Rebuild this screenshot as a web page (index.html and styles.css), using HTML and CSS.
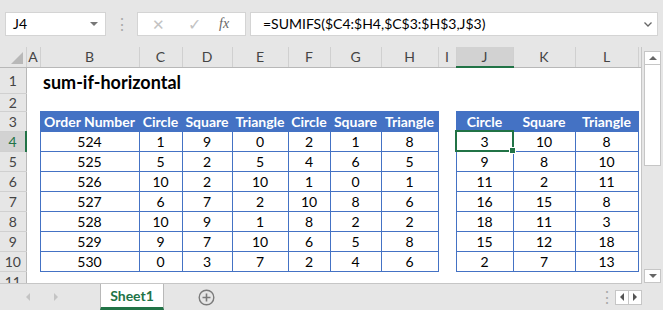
FILE: index.html
```html
<!DOCTYPE html>
<html lang="en">
<head>
    <meta charset="UTF-8">
    <title>sum-if-horizontal</title>
    <link rel="stylesheet" href="styles.css">
</head>
<body>
    <div class="app">
        <!-- formula bar -->
        <div class="formula-bar">
            <div class="name-box">J4<span class="drop"></span></div>
            <div class="grip">&#8942;</div>
            <div class="fx-box">
                <span class="fx-cancel">&#x2715;</span>
                <span class="fx-enter">&#x2713;</span>
                <span class="fx-label">fx</span>
            </div>
            <div class="formula-input">=SUMIFS($C4:$H4,$C$3:$H$3,J$3)
                <svg class="chevron" width="8" height="5" viewBox="0 0 8 5"><path d="M0.5 0.5 L4 4 L7.5 0.5" fill="none" stroke="#666" stroke-width="1.3"/></svg>
            </div>
        </div>

        <div class="main">
            <div class="sheet">
                <table class="grid">
                    <colgroup>
                        <col style="width:26px"><col style="width:14px"><col style="width:99px">
                        <col style="width:43px"><col style="width:50px"><col style="width:56px">
                        <col style="width:42px"><col style="width:51px"><col style="width:57px">
                        <col style="width:18px"><col style="width:57px"><col style="width:62px">
                        <col style="width:63px"><col style="width:4px">
                    </colgroup>
                    <thead>
                        <tr class="col-heads">
                            <th class="corner"><span class="select-all"></span></th>
                            <th>A</th><th>B</th><th>C</th><th>D</th><th>E</th><th>F</th><th>G</th><th>H</th>
                            <th>I</th><th class="active">J</th><th>K</th><th>L</th><th></th>
                        </tr>
                    </thead>
                    <tbody>
                        <tr class="row-1">
                            <th class="rh">1</th><td></td><td class="title">sum-if-horizontal</td>
                            <td></td><td></td><td></td><td></td><td></td><td></td><td></td><td></td><td></td><td></td><td></td>
                        </tr>
                        <tr class="row-2">
                            <th class="rh">2</th><td></td><td></td><td></td><td></td><td></td><td></td><td></td><td></td><td></td><td></td><td></td><td></td><td></td>
                        </tr>
                        <tr>
                            <th class="rh">3</th><td></td>
                            <td class="hd">Order Number</td><td class="hd">Circle</td><td class="hd">Square</td><td class="hd">Triangle</td>
                            <td class="hd">Circle</td><td class="hd">Square</td><td class="hd">Triangle</td>
                            <td></td>
                            <td class="hd">Circle</td><td class="hd">Square</td><td class="hd">Triangle</td><td></td>
                        </tr>
                        <tr>
                            <th class="rh active">4</th><td></td>
                            <td class="c">524</td><td class="c">1</td><td class="c">9</td><td class="c">0</td><td class="c">2</td><td class="c">1</td><td class="c">8</td>
                            <td></td>
                            <td class="c sel">3<span class="sel-box"></span></td><td class="c">10</td><td class="c">8</td><td></td>
                        </tr>
                        <tr>
                            <th class="rh">5</th><td></td>
                            <td class="c">525</td><td class="c">5</td><td class="c">2</td><td class="c">5</td><td class="c">4</td><td class="c">6</td><td class="c">5</td>
                            <td></td>
                            <td class="c">9</td><td class="c">8</td><td class="c">10</td><td></td>
                        </tr>
                        <tr>
                            <th class="rh">6</th><td></td>
                            <td class="c">526</td><td class="c">10</td><td class="c">2</td><td class="c">10</td><td class="c">1</td><td class="c">0</td><td class="c">1</td>
                            <td></td>
                            <td class="c">11</td><td class="c">2</td><td class="c">11</td><td></td>
                        </tr>
                        <tr>
                            <th class="rh">7</th><td></td>
                            <td class="c">527</td><td class="c">6</td><td class="c">7</td><td class="c">2</td><td class="c">10</td><td class="c">8</td><td class="c">6</td>
                            <td></td>
                            <td class="c">16</td><td class="c">15</td><td class="c">8</td><td></td>
                        </tr>
                        <tr>
                            <th class="rh">8</th><td></td>
                            <td class="c">528</td><td class="c">10</td><td class="c">9</td><td class="c">1</td><td class="c">8</td><td class="c">2</td><td class="c">2</td>
                            <td></td>
                            <td class="c">18</td><td class="c">11</td><td class="c">3</td><td></td>
                        </tr>
                        <tr>
                            <th class="rh">9</th><td></td>
                            <td class="c">529</td><td class="c">9</td><td class="c">7</td><td class="c">10</td><td class="c">6</td><td class="c">5</td><td class="c">8</td>
                            <td></td>
                            <td class="c">15</td><td class="c">12</td><td class="c">18</td><td></td>
                        </tr>
                        <tr>
                            <th class="rh">10</th><td></td>
                            <td class="c">530</td><td class="c">0</td><td class="c">3</td><td class="c">7</td><td class="c">2</td><td class="c">4</td><td class="c">6</td>
                            <td></td>
                            <td class="c">2</td><td class="c">7</td><td class="c">13</td><td></td>
                        </tr>
                        <tr>
                            <th class="rh">11</th><td></td><td></td><td></td><td></td><td></td><td></td><td></td><td></td><td></td><td></td><td></td><td></td><td></td>
                        </tr>
                    </tbody>
                </table>
            </div>
            <div class="vscroll">
                <div class="sb-btn"><span class="tri-up"></span></div>
                <div class="sb-thumb"></div>
                <div class="sb-track"></div>
                <div class="sb-btn"><span class="tri-down"></span></div>
            </div>
        </div>

        <!-- sheet tabs -->
        <div class="tab-bar">
            <div class="tab-nav">
                <span class="tri-left light"></span>
                <span class="tri-right light"></span>
            </div>
            <div class="tab active-tab">Sheet1</div>
            <div class="add-sheet">
                <svg width="17" height="17" viewBox="0 0 17 17">
                    <circle cx="8.5" cy="8.5" r="7.3" fill="none" stroke="#7a7a7a" stroke-width="1.4"/>
                    <path d="M8.5 4.5 V12.5 M4.5 8.5 H12.5" stroke="#7a7a7a" stroke-width="1.6"/>
                </svg>
            </div>
            <div class="spacer"></div>
            <div class="grip small">&#8942;</div>
            <div class="h-scroll">
                <div class="hs-btn"><span class="tri-left"></span></div>
                <div class="hs-btn"><span class="tri-right"></span></div>
            </div>
        </div>
    </div>
</body>
</html>
```

FILE: styles.css
```css
/* page */
body {
    margin: 0;
    font-family: 'Lato', 'Liberation Sans', sans-serif;
    color: #000;
    background-color: #e6e6e6;
    overflow: hidden;
}

.app {
    width: 663px;
    height: 310px;
    display: flex;
    flex-direction: column;
    background-color: #e6e6e6;
}

/* formula bar */
.formula-bar {
    height: 47px;
    box-sizing: border-box;
    padding: 12px 5px 0 5px;
    display: flex;
    align-items: flex-start;
}

.name-box {
    width: 101px;
    height: 24px;
    box-sizing: border-box;
    background-color: #fff;
    border: 1px solid #d4d4d4;
    padding-left: 7px;
    font-size: 14px;
    line-height: 22px;
    position: relative;
}

.drop {
    position: absolute;
    right: 7px;
    top: 9px;
    border-left: 4px solid transparent;
    border-right: 4px solid transparent;
    border-top: 4px solid #777;
}

.grip {
    width: 31px;
    text-align: center;
    color: #aaa;
    font-size: 16px;
    line-height: 24px;
}

.fx-box {
    width: 109px;
    height: 24px;
    box-sizing: border-box;
    background-color: #fff;
    border: 1px solid #d4d4d4;
    display: flex;
    align-items: center;
}

.fx-cancel {
    width: 18px;
    margin-left: 11px;
    color: #c3c3c3;
    font-size: 15px;
    text-align: center;
}

.fx-enter {
    width: 18px;
    margin-left: 18px;
    color: #c3c3c3;
    font-size: 16px;
    text-align: center;
}

.fx-label {
    margin-left: 16px;
    font-family: 'Liberation Serif', serif;
    font-style: italic;
    font-size: 14px;
    color: #666;
}

.formula-input {
    margin-left: 4px;
    flex: 1;
    height: 24px;
    box-sizing: border-box;
    background-color: #fff;
    border: 1px solid #d4d4d4;
    padding-left: 12px;
    font-size: 14px;
    line-height: 22px;
    position: relative;
}

.chevron {
    position: absolute;
    right: 5px;
    top: 9px;
}

/* sheet */
.main {
    height: 237px;
    display: flex;
}

.sheet {
    width: 642px;
    height: 237px;
    box-sizing: border-box;
    border-right: 1px solid #c6c6c6;
    border-bottom: 1px solid #c6c6c6;
    overflow: hidden;
    background-color: #fff;
}

.grid {
    table-layout: fixed;
    border-collapse: collapse;
    width: 641px;
    font-size: 14px;
}

.grid td,
.grid th {
    padding: 0;
    white-space: nowrap;
    text-align: center;
    height: 20px;
    box-sizing: border-box;
}

.col-heads th {
    background-color: #e6e6e6;
    font-weight: normal;
    color: #444;
    border-right: 1px solid #d0d0d0;
    border-bottom: 1px solid #b8b8b8;
    height: 20px;
}

.col-heads th.active {
    background-color: #d2d2d2;
    border-bottom: 2px solid #217346;
}

.corner {
    position: relative;
}

.select-all {
    position: absolute;
    right: 3px;
    bottom: 3px;
    border-left: 12px solid transparent;
    border-bottom: 12px solid #b8b8b8;
}

.rh {
    background-color: #e6e6e6;
    font-weight: normal;
    color: #444;
    border-right: 1px solid #b8b8b8;
    border-bottom: 1px solid #d0d0d0;
}

.rh.active {
    background-color: #d2d2d2;
    color: #217346;
    border-right: 2px solid #217346;
}

.row-1 td,
.row-1 th {
    height: 26px;
}

.row-2 td,
.row-2 th {
    height: 18px;
}

.title {
    text-align: left !important;
    padding-left: 3px !important;
    font-size: 18px;
    font-weight: bold;
    vertical-align: bottom;
    overflow: visible;
}

.hd {
    background-color: #4472c4;
    color: #fff;
    font-weight: bold;
    border: 1px solid #4472c4;
}

.c {
    border: 1px solid #4472c4;
}

.sel {
    position: relative;
}

.sel-box {
    position: absolute;
    top: -2px;
    left: -2px;
    right: -1px;
    bottom: -1px;
    border: 2px solid #217346;
}

.sel-box::after {
    content: "";
    position: absolute;
    right: -4px;
    bottom: -4px;
    width: 5px;
    height: 5px;
    background-color: #217346;
    border: 1px solid #fff;
}

/* vertical scrollbar */
.vscroll {
    width: 21px;
    box-sizing: border-box;
    padding: 4px 2px 1px 2px;
    display: flex;
    flex-direction: column;
}

.sb-btn {
    height: 12px;
    background-color: #fff;
    border: 1px solid #c6c6c6;
    display: flex;
    align-items: center;
    justify-content: center;
}

.sb-thumb {
    height: 100px;
    background-color: #fff;
    border: 1px solid #c6c6c6;
    border-top: none;
}

.sb-track {
    flex: 1;
}

.tri-up {
    border-left: 4px solid transparent;
    border-right: 4px solid transparent;
    border-bottom: 4px solid #666;
}

.tri-down {
    border-left: 4px solid transparent;
    border-right: 4px solid transparent;
    border-top: 4px solid #666;
}

/* tabs */
.tab-bar {
    height: 26px;
    display: flex;
    align-items: stretch;
}

.tab-nav {
    width: 100px;
    display: flex;
    align-items: center;
    padding-left: 26px;
    box-sizing: border-box;
    gap: 24px;
}

.tri-left {
    border-top: 4px solid transparent;
    border-bottom: 4px solid transparent;
    border-right: 4px solid #555;
}

.tri-right {
    border-top: 4px solid transparent;
    border-bottom: 4px solid transparent;
    border-left: 4px solid #555;
}

.tri-left.light {
    border-right-color: #c4c4c4;
}

.tri-right.light {
    border-left-color: #c4c4c4;
}

.tab {
    width: 64px;
    box-sizing: border-box;
    background-color: #fff;
    border-left: 1px solid #b8b8b8;
    border-right: 1px solid #b8b8b8;
    border-bottom: 3px solid #217346;
    color: #217346;
    font-weight: bold;
    font-size: 14px;
    text-align: center;
    line-height: 24px;
}

.add-sheet {
    margin-left: 34px;
    display: flex;
    align-items: center;
}

.spacer {
    flex: 1;
}

.grip.small {
    width: 14px;
    line-height: 26px;
    margin-right: 2px;
}

.h-scroll {
    display: flex;
    align-items: center;
    margin-right: 21px;
}

.hs-btn {
    width: 12px;
    height: 13px;
    border: 1px solid #c6c6c6;
    background-color: #fff;
    display: flex;
    align-items: center;
    justify-content: center;
}

.hs-btn + .hs-btn {
    border-left: none;
}
```
